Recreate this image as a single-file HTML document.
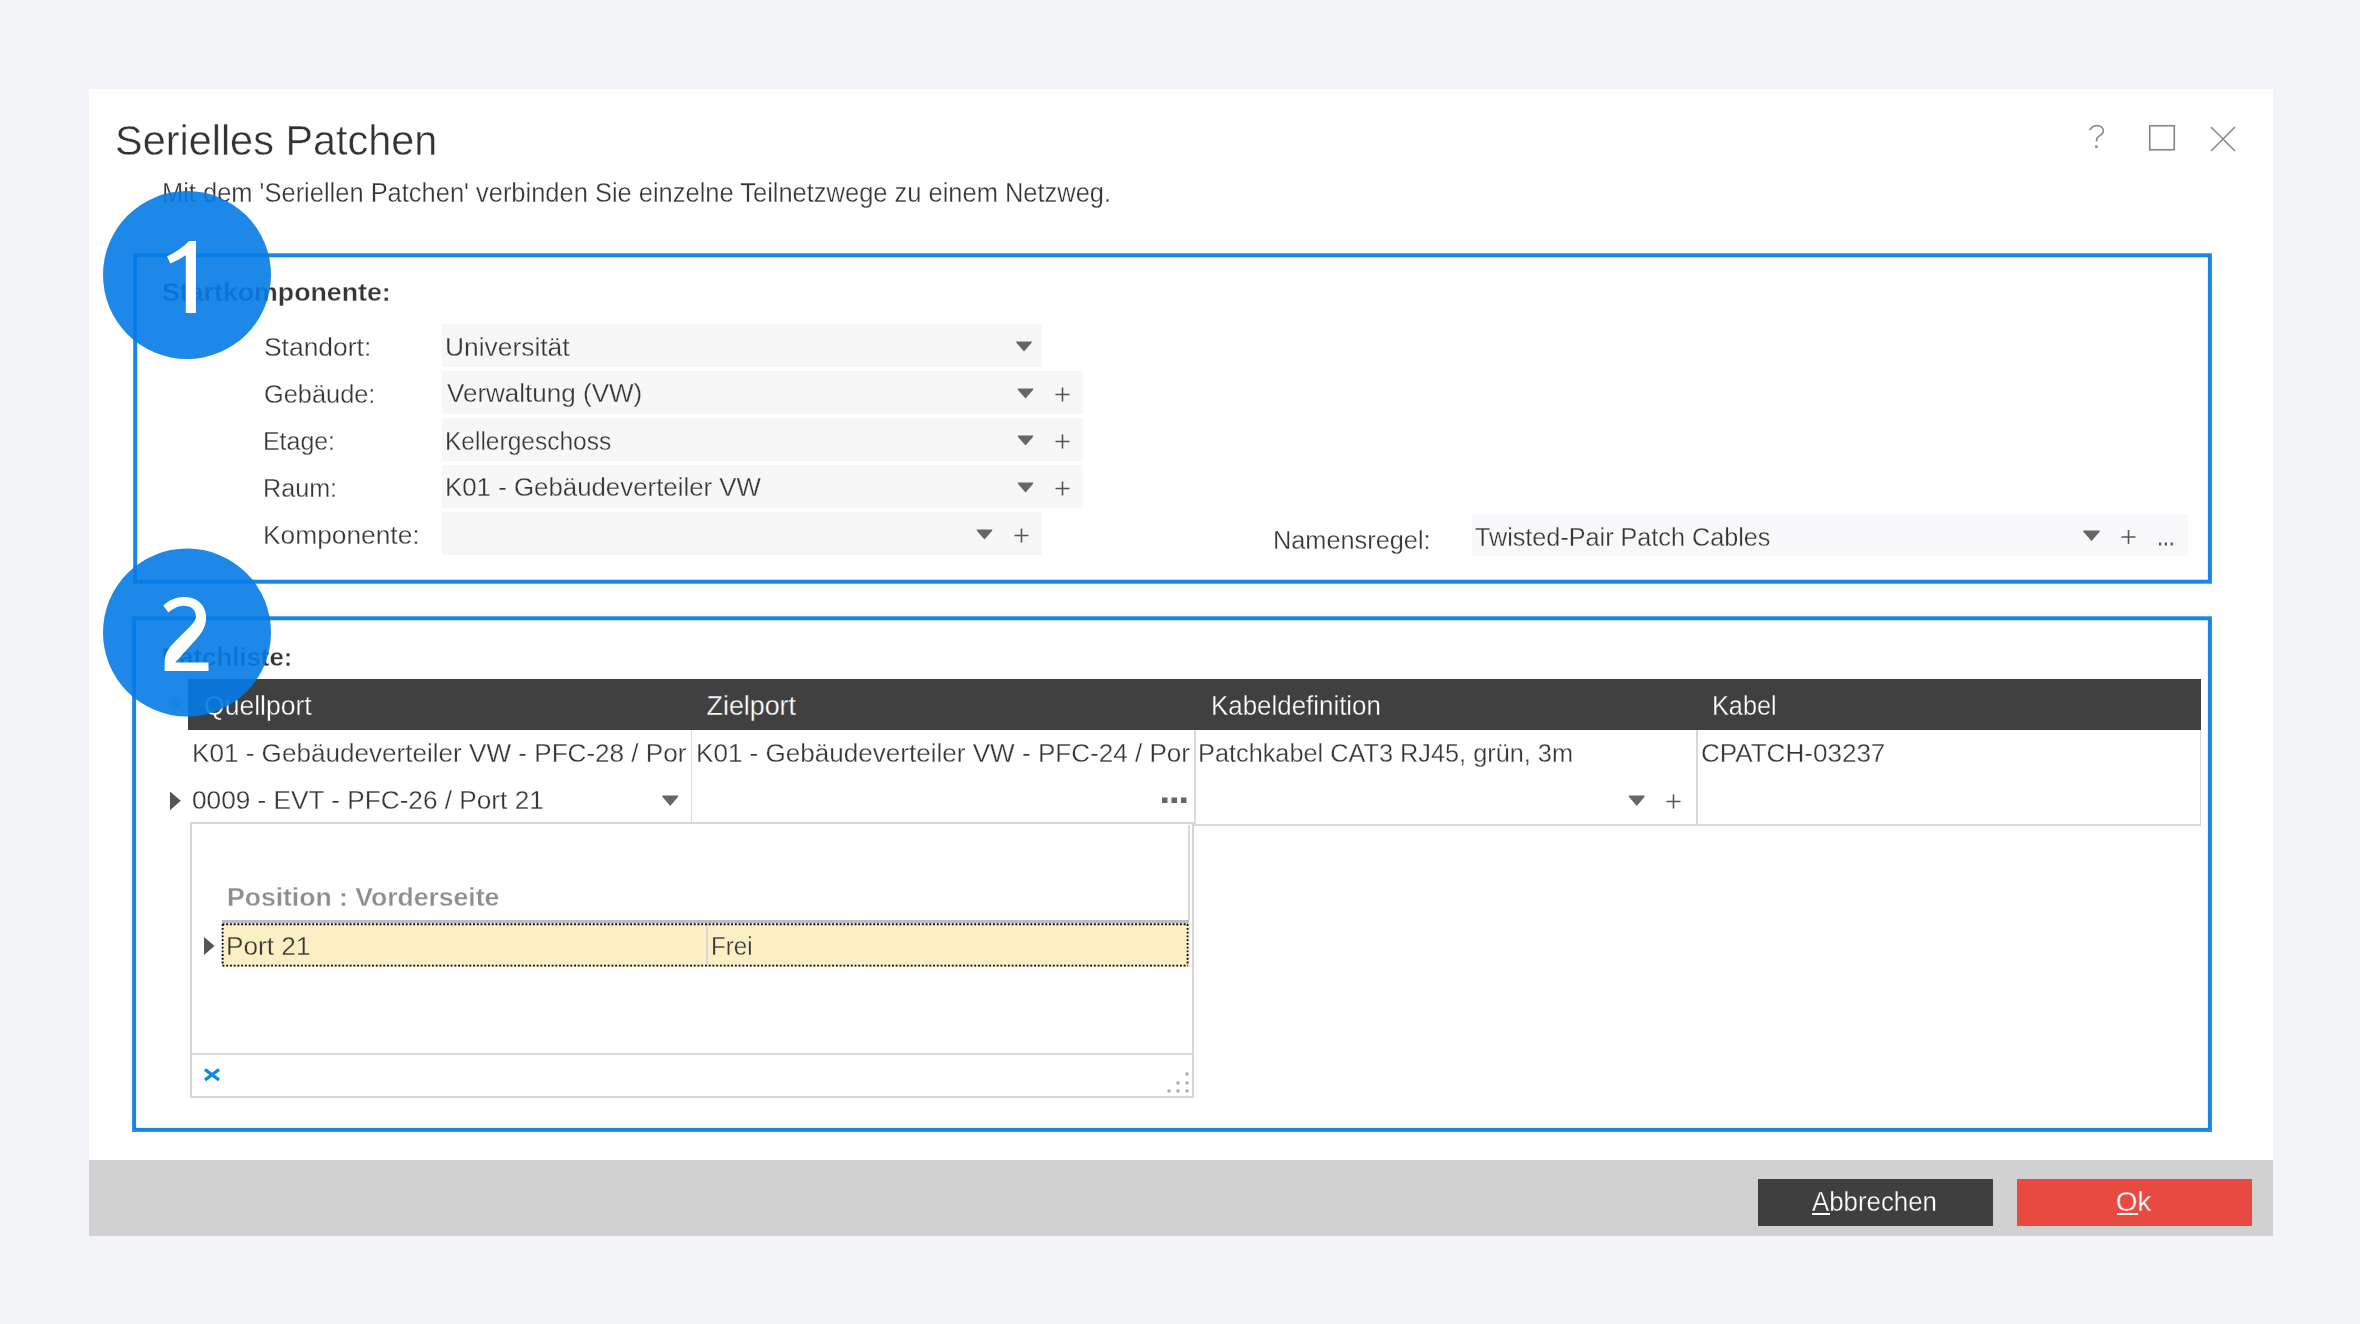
<!DOCTYPE html>
<html><head><meta charset="utf-8"><style>
html,body{margin:0;padding:0}
body{width:2360px;height:1324px;position:relative;overflow:hidden;background:#f3f4f8;font-family:"Liberation Sans",sans-serif}
.a{position:absolute}
.t{position:absolute;white-space:pre;line-height:1;transform-origin:0 0;font-family:"Liberation Sans",sans-serif}
.fld{position:absolute;background:#f7f7f7}
.gl{position:absolute;background:#d9d9d9}
</style></head><body>
<div class="a" style="left:89px;top:89px;width:2184px;height:1147px;background:#fff"></div>
<div class="a" style="left:89px;top:1160px;width:2184px;height:76px;background:#d1d1d1"></div>
<div class="a" style="left:1758px;top:1179px;width:235px;height:47px;background:#3f3f3f"></div>
<div class="a" style="left:2017px;top:1179px;width:235px;height:47px;background:#e64a40"></div>
<div class="a" style="left:1812px;top:1213px;width:18px;height:2px;background:#fff"></div>
<div class="a" style="left:2117px;top:1213px;width:20.5px;height:2px;background:#fff"></div>
<div class="fld" style="left:442px;top:324px;width:600px;height:43px"></div>
<div class="fld" style="left:442px;top:371px;width:641px;height:43px"></div>
<div class="fld" style="left:442px;top:418px;width:641px;height:43px"></div>
<div class="fld" style="left:442px;top:465px;width:641px;height:43px"></div>
<div class="fld" style="left:442px;top:512px;width:600px;height:43px"></div>
<div class="fld" style="left:1472px;top:514px;width:716px;height:42px;background:#f9f9fb"></div>
<!-- grid header -->
<div class="a" style="left:188.3px;top:679px;width:2013px;height:50.5px;background:#404040"></div>
<div class="gl" style="left:690.5px;top:729.5px;width:1.5px;height:94px"></div>
<div class="gl" style="left:1194px;top:729.5px;width:1.5px;height:95px"></div>
<div class="gl" style="left:1696px;top:729.5px;width:1.5px;height:95px"></div>
<div class="gl" style="left:2199.5px;top:729.5px;width:1.5px;height:96px"></div>
<div class="gl" style="left:1194px;top:824px;width:1007px;height:1.5px"></div>
<!-- popup -->
<div class="a" style="left:190px;top:822px;width:1000px;height:272px;border:2px solid #d6d6d6;background:#fff"></div>
<div class="gl" style="left:190.5px;top:1053px;width:1003px;height:1.5px"></div>
<div class="gl" style="left:1188px;top:825px;width:1.5px;height:95px"></div>
<div class="a" style="left:222px;top:920px;width:967px;height:3px;background:#bdbdbd"></div>
<div class="a" style="left:222px;top:923px;width:967.5px;height:44px;background:#fdefc4"></div>
<div class="a" style="left:706px;top:924px;width:1.5px;height:42px;background:#d9d9d9"></div>
<svg class="a" style="left:0;top:0" width="2360" height="1324" viewBox="0 0 2360 1324">
<defs><filter id="bl" x="-20%" y="-20%" width="140%" height="140%"><feGaussianBlur stdDeviation="0.45"/></filter></defs>
<polygon points="1016,341.5 1032,341.5 1031,343.5 1024.0,351.5 1017,343.5" fill="#666" filter="url(#bl)"/><polygon points="1017.5,388.5 1033.5,388.5 1032.5,390.5 1025.5,398.5 1018.5,390.5" fill="#666" filter="url(#bl)"/><path d="M1055.5,394.5H1069.5M1062.5,387.5V401.5" stroke="#555" stroke-width="1.6" fill="none"/><polygon points="1017.5,435.5 1033.5,435.5 1032.5,437.5 1025.5,445.5 1018.5,437.5" fill="#666" filter="url(#bl)"/><path d="M1055.5,441.5H1069.5M1062.5,434.5V448.5" stroke="#555" stroke-width="1.6" fill="none"/><polygon points="1017.5,482.5 1033.5,482.5 1032.5,484.5 1025.5,492.5 1018.5,484.5" fill="#666" filter="url(#bl)"/><path d="M1055.5,488.5H1069.5M1062.5,481.5V495.5" stroke="#555" stroke-width="1.6" fill="none"/><polygon points="976.5,529.5 992.5,529.5 991.5,531.5 984.5,539.5 977.5,531.5" fill="#666" filter="url(#bl)"/><path d="M1014.5,535.5H1028.5M1021.5,528.5V542.5" stroke="#555" stroke-width="1.6" fill="none"/><polygon points="2083,530.5 2100,530.5 2099,532.5 2091.5,541.0 2084,532.5" fill="#666" filter="url(#bl)"/><path d="M2121.5,537H2135.5M2128.5,530V544" stroke="#555" stroke-width="1.6" fill="none"/><rect x="2159.0" y="542.5" width="2.2" height="3" fill="#555"/><rect x="2164.8" y="542.5" width="2.2" height="3" fill="#555"/><rect x="2170.6" y="542.5" width="2.2" height="3" fill="#555"/><polygon points="662,795.5 678.5,795.5 677.5,797.5 670.25,806.0 663,797.5" fill="#666" filter="url(#bl)"/><polygon points="1628.5,795.5 1645,795.5 1644,797.5 1636.75,806.0 1629.5,797.5" fill="#666" filter="url(#bl)"/><path d="M1666.5,801.5H1680.5M1673.5,794.5V808.5" stroke="#555" stroke-width="1.6" fill="none"/><rect x="1162.0" y="797.5" width="5.5" height="5.5" fill="#666"/><rect x="1171.5" y="797.5" width="5.5" height="5.5" fill="#666"/><rect x="1181.0" y="797.5" width="5.5" height="5.5" fill="#666"/><polygon points="170,791.5 180.8,800.8 170,810.2" fill="#555"/><polygon points="204,937 214.5,946 204,955" fill="#555"/><path d="M222.5,924.2 H1188 M222.5,965.6 H1188 M222.6,924.2 V965.6 M1187.6,924.2 V965.6" stroke="#050530" stroke-width="1.9" stroke-dasharray="1.9 1.84" fill="none"/><path d="M205,1069.5 L219,1080 M219,1069.5 L205,1080" stroke="#0a8ad8" stroke-width="3.4" fill="none"/><rect x="1185.5" y="1072.5" width="3" height="3" fill="#aaa"/><rect x="1185.5" y="1081.5" width="3" height="3" fill="#aaa"/><rect x="1176.5" y="1081.5" width="3" height="3" fill="#aaa"/><rect x="1185.5" y="1089.5" width="3" height="3" fill="#aaa"/><rect x="1176.5" y="1089.5" width="3" height="3" fill="#aaa"/><rect x="1167.5" y="1089.5" width="3" height="3" fill="#aaa"/><rect x="2149.75" y="125.75" width="24.5" height="24" fill="none" stroke="#858585" stroke-width="1.6"/><path d="M2211,127 L2235,151 M2235,127 L2211,151" stroke="#8a8a8a" stroke-width="1.6" fill="none"/><path d="M2089.8,130.2 C2091.5,127 2094,125.6 2097,125.6 C2101,125.6 2103.3,128 2103.3,131 C2103.3,134 2100.5,135.3 2098.5,136.5 C2097,137.5 2096.4,138.8 2096.4,141.5" stroke="#8e8e8e" stroke-width="1.7" fill="none"/><rect x="2095.1" y="145.4" width="2.6" height="2.6" fill="#8e8e8e"/><path d="M174.5,695 V711 M166.5,703.5 H182.5 M168.5,698.5 L180.5,708.5 M180.5,698.5 L168.5,708.5" stroke="#c8c8c8" stroke-width="2.2" fill="none"/>
</svg>
<div class="t" style="left:115.06px;top:118.50px;font-size:42.8px;font-weight:normal;color:#333;-webkit-text-stroke:0.45px #fff;transform:scaleX(0.9680);">Serielles Patchen</div><div class="t" style="left:162.10px;top:179.50px;font-size:26.8px;font-weight:normal;color:#363636;-webkit-text-stroke:0.3px #fff;transform:scaleX(0.9502);">Mit dem 'Seriellen Patchen' verbinden Sie einzelne Teilnetzwege zu einem Netzweg.</div><div class="t" style="left:161.98px;top:279.00px;font-size:26.2px;font-weight:bold;color:#363636;-webkit-text-stroke:0.3px #fff;transform:scaleX(1.0204);">Startkomponente:</div><div class="t" style="left:263.50px;top:333.50px;font-size:26.3px;font-weight:normal;color:#363636;-webkit-text-stroke:0.3px #fff;transform:scaleX(1.0048);">Standort:</div><div class="t" style="left:263.54px;top:380.50px;font-size:26.3px;font-weight:normal;color:#363636;-webkit-text-stroke:0.3px #fff;transform:scaleX(0.9643);">Gebäude:</div><div class="t" style="left:262.91px;top:428.00px;font-size:26.3px;font-weight:normal;color:#363636;-webkit-text-stroke:0.3px #fff;transform:scaleX(0.9472);">Etage:</div><div class="t" style="left:262.89px;top:474.70px;font-size:26.3px;font-weight:normal;color:#363636;-webkit-text-stroke:0.3px #fff;transform:scaleX(0.9562);">Raum:</div><div class="t" style="left:262.80px;top:521.70px;font-size:26.3px;font-weight:normal;color:#363636;-webkit-text-stroke:0.3px #fff;transform:scaleX(1.0013);">Komponente:</div><div class="t" style="left:444.99px;top:334.40px;font-size:26.3px;font-weight:normal;color:#363636;-webkit-text-stroke:0.3px #f7f7f7;transform:scaleX(1.0033);">Universität</div><div class="t" style="left:447.00px;top:380.40px;font-size:26.3px;font-weight:normal;color:#363636;-webkit-text-stroke:0.3px #f7f7f7;transform:scaleX(0.9898);">Verwaltung (VW)</div><div class="t" style="left:445.14px;top:427.60px;font-size:26.3px;font-weight:normal;color:#363636;-webkit-text-stroke:0.3px #f7f7f7;transform:scaleX(0.9318);">Kellergeschoss</div><div class="t" style="left:445.04px;top:474.40px;font-size:26.3px;font-weight:normal;color:#363636;-webkit-text-stroke:0.3px #f7f7f7;transform:scaleX(0.9825);">K01 - Gebäudeverteiler VW</div><div class="t" style="left:1272.58px;top:527.00px;font-size:26.3px;font-weight:normal;color:#363636;-webkit-text-stroke:0.3px #fff;transform:scaleX(0.9625);">Namensregel:</div><div class="t" style="left:1475.24px;top:523.50px;font-size:26.3px;font-weight:normal;color:#363636;-webkit-text-stroke:0.3px #f9f9fb;transform:scaleX(0.9577);">Twisted-Pair Patch Cables</div><div class="t" style="left:162.03px;top:643.50px;font-size:26.2px;font-weight:bold;color:#363636;-webkit-text-stroke:0.3px #fff;transform:scaleX(0.9844);">Patchliste:</div><div class="t" style="left:204.01px;top:693.00px;font-size:26.8px;font-weight:normal;color:#fff;-webkit-text-stroke:0.3px #404040;transform:scaleX(0.9907);">Quellport</div><div class="t" style="left:706.60px;top:693.00px;font-size:26.8px;font-weight:normal;color:#fff;-webkit-text-stroke:0.3px #404040;transform:scaleX(1.0000);">Zielport</div><div class="t" style="left:1210.57px;top:693.00px;font-size:26.8px;font-weight:normal;color:#fff;-webkit-text-stroke:0.3px #404040;transform:scaleX(0.9666);">Kabeldefinition</div><div class="t" style="left:1711.87px;top:693.00px;font-size:26.8px;font-weight:normal;color:#fff;-webkit-text-stroke:0.3px #404040;transform:scaleX(0.9423);">Kabel</div><div class="t" style="left:192.04px;top:739.50px;font-size:26.6px;font-weight:normal;color:#363636;-webkit-text-stroke:0.3px #fff;transform:scaleX(0.9811);">K01 - Gebäudeverteiler VW - PFC-28 / Por</div><div class="t" style="left:696.04px;top:739.50px;font-size:26.6px;font-weight:normal;color:#363636;-webkit-text-stroke:0.3px #fff;transform:scaleX(0.9801);">K01 - Gebäudeverteiler VW - PFC-24 / Por</div><div class="t" style="left:1198.10px;top:739.50px;font-size:26.6px;font-weight:normal;color:#363636;-webkit-text-stroke:0.3px #fff;transform:scaleX(0.9514);">Patchkabel CAT3 RJ45, grün, 3m</div><div class="t" style="left:1700.62px;top:739.50px;font-size:26.6px;font-weight:normal;color:#363636;-webkit-text-stroke:0.3px #fff;transform:scaleX(0.9796);">CPATCH-03237</div><div class="t" style="left:192.02px;top:786.50px;font-size:26.6px;font-weight:normal;color:#363636;-webkit-text-stroke:0.3px #fff;transform:scaleX(0.9848);">0009 - EVT - PFC-26 / Port 21</div><div class="t" style="left:226.77px;top:884.00px;font-size:26.2px;font-weight:bold;color:#8e8e8e;-webkit-text-stroke:0.3px #fff;transform:scaleX(1.0132);">Position : Vorderseite</div><div class="t" style="left:226.01px;top:933.00px;font-size:26.3px;font-weight:normal;color:#363636;-webkit-text-stroke:0.3px #fdefc4;transform:scaleX(0.9963);">Port 21</div><div class="t" style="left:711.17px;top:932.50px;font-size:26.3px;font-weight:normal;color:#363636;-webkit-text-stroke:0.3px #fdefc4;transform:scaleX(0.9167);">Frei</div><div class="t" style="left:1812.00px;top:1188.00px;font-size:27.5px;font-weight:normal;color:#fff;-webkit-text-stroke:0.3px #3f3f3f;transform:scaleX(0.9389);">Abbrechen</div><div class="t" style="left:2116.00px;top:1188.00px;font-size:27.5px;font-weight:normal;color:#fff;-webkit-text-stroke:0.3px #e64a40;transform:scaleX(1.0000);">Ok</div>

<svg class="a" style="left:0;top:0" width="2360" height="1324" viewBox="0 0 2360 1324">
<rect x="135.2" y="255.3" width="2074.7" height="326.4" fill="none" stroke="#1a86e6" stroke-width="4"/>
<rect x="134.1" y="618.3" width="2075.8" height="511.6" fill="none" stroke="#1a86e6" stroke-width="4"/>
<circle cx="187" cy="275" r="84" fill="rgb(5,123,229)" fill-opacity="0.9"/>
<circle cx="187" cy="632.5" r="84" fill="rgb(5,123,229)" fill-opacity="0.9"/>
<path d="M189.1,240.9 L196,240.9 L196,313.1 L185.8,313.1 L185.8,255.2 Q178,260.5 170.3,263.4 L167,256.2 Q180,250.5 189.1,240.9 Z" fill="#fff"/>
<path d="M163.3,605.4 C169.5,600 176,597.1 184,597.1 C197.5,597.1 206.1,605.5 206.1,617.6 C206.1,628 201,635 191,645 L175.2,662.5 L208.5,662.5 L208.5,671 L164.6,671 L164.6,662 C164.6,654 168,648.5 176,640.5 L187,629.5 C193,623.5 195.9,620.5 195.9,616.5 C195.9,609.5 191,605.7 183.6,605.7 C178,605.7 173,608.5 168.4,612.5 Z" fill="#fff"/>
</svg>
</body></html>
